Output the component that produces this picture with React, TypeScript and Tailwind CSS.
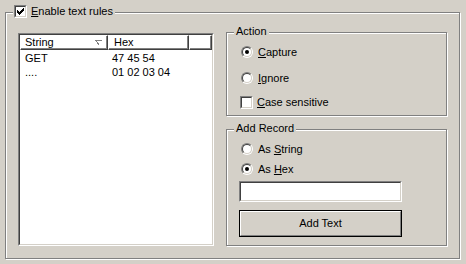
import React from 'react';

const FACE = 'bg-[#d4d0c8]';

const Sunken: React.FC<{ className?: string; children?: React.ReactNode }> = ({ className = '', children }) => (
  <div className={`border border-t-[#808080] border-l-[#808080] border-r-white border-b-white ${className}`}>
    <div className="h-full w-full border border-t-[#404040] border-l-[#404040] border-r-[#d4d0c8] border-b-[#d4d0c8] bg-white">
      {children}
    </div>
  </div>
);

const CheckBox: React.FC<{ checked?: boolean }> = ({ checked }) => (
  <Sunken className="w-[13px] h-[13px] shrink-0">
    {checked && (
      <svg width="7" height="7" viewBox="0 0 7 7" className="ml-[1px] mt-[1px]" shapeRendering="crispEdges">
        <path d="M6 0h1v1H6zM5 1h2v1H5zM0 2h1v1H0zM4 2h3v1H4zM0 3h2v1H0zM3 3h3v1H3zM0 4h5v1H0zM1 5h3v1H1zM2 6h1v1H2z" fill="#000" />
      </svg>
    )}
  </Sunken>
);

const Radio: React.FC<{ checked?: boolean }> = ({ checked }) => (
  <div className="w-[12px] h-[12px] shrink-0 rounded-full border border-t-[#808080] border-l-[#808080] border-r-white border-b-white">
    <div className="h-full w-full rounded-full border border-t-[#404040] border-l-[#404040] border-r-[#d4d0c8] border-b-[#d4d0c8] bg-white flex items-center justify-center">
      {checked && <div className="w-[4px] h-[4px] rounded-full bg-black" />}
    </div>
  </div>
);

const Group: React.FC<{ title: React.ReactNode; className?: string; children?: React.ReactNode }> = ({ title, className = '', children }) => (
  <div className={`relative border border-[#808080] shadow-[1px_1px_0_#fff,inset_1px_1px_0_#fff] ${className}`}>
    <span className={`absolute left-[7px] top-[-8px] px-[2px] leading-[13px] ${FACE}`}>{title}</span>
    {children}
  </div>
);

const HeaderCell: React.FC<{ className?: string; children?: React.ReactNode }> = ({ className = '', children }) => (
  <div className={`h-full border border-t-white border-l-white border-r-[#404040] border-b-[#404040] shadow-[inset_-1px_-1px_0_#808080] flex items-center ${className}`}>
    {children}
  </div>
);

const rows = [
  { s: 'GET', h: '47 45 54' },
  { s: '....', h: '01 02 03 04' },
];

export default function App() {
  return (
    <div className={`w-[466px] h-[264px] overflow-hidden ${FACE} text-black text-[11px] font-['Tahoma','Liberation_Sans',sans-serif] pt-[12px] pl-[5px]`}>
      <div className="relative w-[455px] h-[247px] border border-[#808080] shadow-[1px_1px_0_#fff,inset_1px_1px_0_#fff]">
        <div className={`absolute left-[7px] top-[-8px] pl-[1px] pr-[2px] flex items-center gap-[4px] ${FACE}`}>
          <CheckBox checked />
          <span className="leading-[13px]">
            <u>E</u>nable text rules
          </span>
        </div>

        <div className="flex items-start pl-[12px] pt-[20px]">
          <Sunken className="w-[196px] h-[213px]">
            <div className="flex h-[15px]">
              <HeaderCell className="w-[88px] pl-[4px] pr-[4px] justify-between">
                <span>String</span>
                <svg width="8" height="5" viewBox="0 0 8 5" shapeRendering="crispEdges">
                  <path d="M0.5 0.5H7.5" stroke="#808080" />
                  <path d="M0.5 0.5L4 4.5" stroke="#808080" />
                  <path d="M7.5 0.5L4 4.5" stroke="#fff" />
                </svg>
              </HeaderCell>
              <HeaderCell className="w-[81px] pl-[5px]">
                <span>Hex</span>
              </HeaderCell>
              <HeaderCell className="flex-1" />
            </div>
            <div className="pt-[1px]">
              {rows.map((r) => (
                <div key={r.h} className="flex h-[14px] items-center">
                  <span className="w-[88px] pl-[5px]">{r.s}</span>
                  <span className="pl-[4px]">{r.h}</span>
                </div>
              ))}
            </div>
          </Sunken>

          <div className="ml-[12px] mt-[-1px] flex flex-col">
            <Group title="Action" className="w-[221px] h-[84px]">
              <div className="flex flex-col pl-[13px] pt-[11px]">
                <div className="flex h-[16px] items-center gap-[5px] pl-[1px]">
                  <Radio checked />
                  <span><u>C</u>apture</span>
                </div>
                <div className="mt-[10px] flex h-[16px] items-center gap-[5px] pl-[1px]">
                  <Radio />
                  <span><u>I</u>gnore</span>
                </div>
                <div className="mt-[8px] flex h-[16px] items-center gap-[4px]">
                  <CheckBox />
                  <span><u>C</u>ase sensitive</span>
                </div>
              </div>
            </Group>

            <Group title="Add Record" className="mt-[13px] w-[221px] h-[117px]">
              <div className="flex flex-col pl-[12px] pt-[11px]">
                <div className="flex h-[16px] items-center gap-[5px] pl-[2px]">
                  <Radio />
                  <span>As <u>S</u>tring</span>
                </div>
                <div className="mt-[4px] flex h-[16px] items-center gap-[5px] pl-[2px]">
                  <Radio checked />
                  <span>As <u>H</u>ex</span>
                </div>
                <Sunken className="mt-[4px] w-[163px] h-[21px]" />
                <button className="mt-[8px] w-[163px] h-[27px] border border-black p-0">
                  <div className="h-full w-full border border-t-white border-l-white border-r-[#808080] border-b-[#808080] flex items-center justify-center">
                    Add Text
                  </div>
                </button>
              </div>
            </Group>
          </div>
        </div>
      </div>
    </div>
  );
}
